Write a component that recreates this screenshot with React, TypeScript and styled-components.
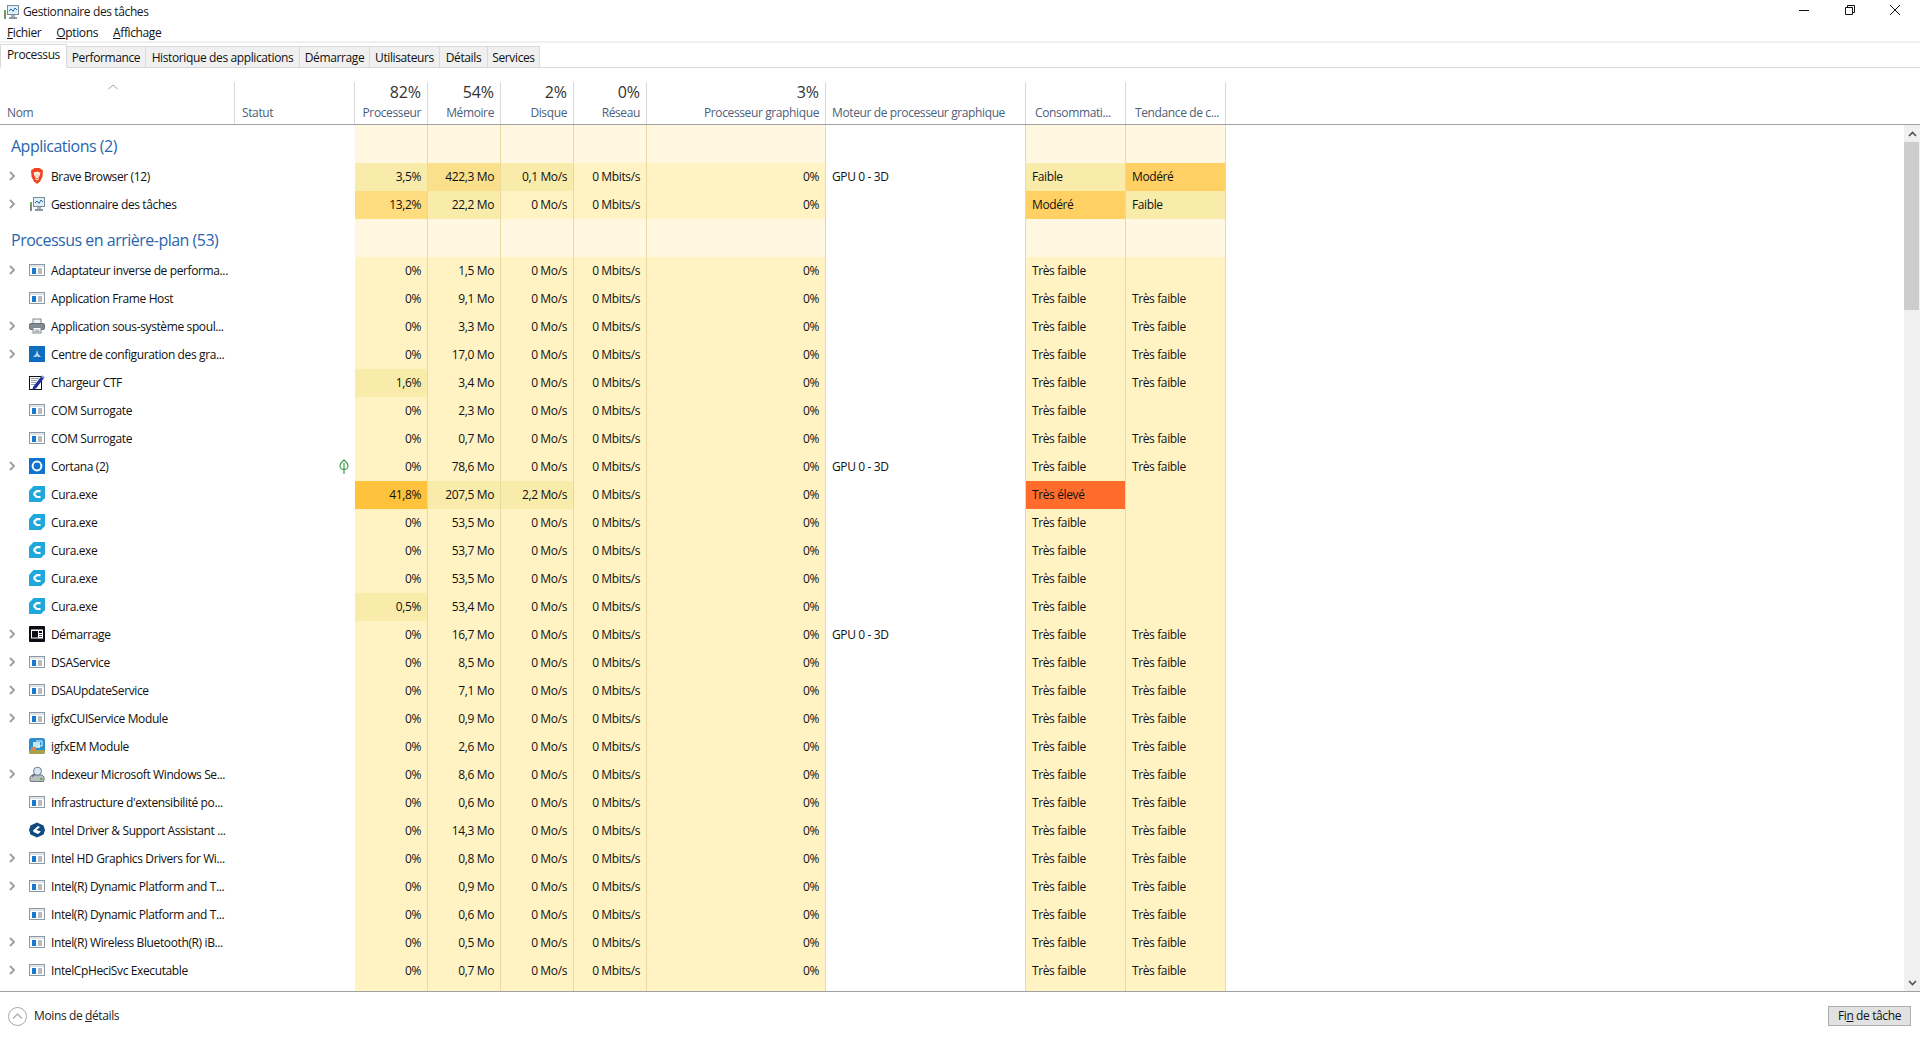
import React from "react";
import styled, { createGlobalStyle } from "styled-components";

const GRID = "235px 120px 73px 73px 73px 73px 179px 200px 100px 100px";
const FONT = `"Open Sans", "Liberation Sans", sans-serif`;

const Global = createGlobalStyle`
  html, body { margin: 0; padding: 0; height: 100%; background: #fff; overflow: hidden; }
  body { font-family: ${FONT}; font-size: 12px; letter-spacing: -0.38px; color: #000; }
`;

const Win = styled.div`
  width: 1920px; height: 1040px; display: flex; flex-direction: column; background: #fff; overflow: hidden;
`;
const TitleBar = styled.div`
  height: 24px; display: flex; align-items: center; padding-left: 3px; gap: 4px; flex: none;
`;
const TitleIcon = styled.div` width: 16px; height: 16px; flex: none; display: flex; `;
const TitleText = styled.span` flex: 1; color: #1a1a1a; padding-bottom: 1px; `;
const WinBtns = styled.div` display: flex; padding-right: 2px; margin-top: -4px; `;
const WinBtn = styled.div`
  width: 45.5px; height: 20px; display: flex; align-items: center; justify-content: center;
`;
const MenuBar = styled.div`
  height: 17px; display: flex; align-items: center; padding-left: 7px; gap: 15px; flex: none;
`;
const MenuItem = styled.span` color: #111; `;
const Under = styled.span` text-decoration: underline; `;
const Band = styled.div` height: 2px; background: #f0f0f0; flex: none; `;
const TabStrip = styled.div`
  height: 25px; display: flex; align-items: flex-end; border-bottom: 1px solid #d9d9d9; box-sizing: border-box; flex: none;
`;
const Tab = styled.div<{ $w: number; $active?: boolean }>`
  width: ${p => p.$w}px; box-sizing: border-box; display: flex; align-items: center; justify-content: center;
  height: ${p => (p.$active ? 24 : 21)}px;
  background: ${p => (p.$active ? "#fff" : "#f0f0f0")};
  border: 1px solid #d9d9d9;
  border-left-width: ${p => (p.$active ? 1 : 0)}px;
  border-bottom: ${p => (p.$active ? "1px solid #fff" : "0")};
  margin-bottom: ${p => (p.$active ? -1 : 0)}px;
  padding-bottom: ${p => (p.$active ? 3 : 0)}px;
  color: #111;
  white-space: nowrap;
`;
const Head = styled.div`
  height: 57px; display: grid; grid-template-columns: ${GRID}; border-bottom: 1px solid #a0a0a0; box-sizing: border-box; flex: none; position: relative;
`;
const HeadCell = styled.div<{ $right?: boolean; $pad?: number }>`
  height: 42px; margin-top: 14px; box-sizing: border-box; display: flex; flex-direction: column; justify-content: flex-end;
  align-items: ${p => (p.$right ? "flex-end" : "flex-start")};
  padding: 0 6px 2px ${p => p.$pad ?? 7}px;
  border-right: 1px solid #d9d9d9;
`;
const HeadPct = styled.div` font-size: 16px; line-height: 20px; margin-bottom: 2px; color: #333; letter-spacing: -0.1px; `;
const HeadLabel = styled.div` color: #4c607a; line-height: 18px; white-space: nowrap; `;
const SortCaret = styled.svg` position: absolute; left: 108px; top: 16px; `;
const BodyWrap = styled.div` flex: 1; min-height: 0; display: flex; `;
const List = styled.div` flex: 1; overflow: hidden; min-width: 0; `;
const Rows = styled.div` display: flex; flex-direction: column; `;
const Row = styled.div<{ $h: number }>`
  display: grid; grid-template-columns: ${GRID}; height: ${p => p.$h}px; flex: none;
`;
const NameCell = styled.div`
  display: flex; align-items: center; min-width: 0; white-space: nowrap; color: #111; padding-bottom: 2px; box-sizing: border-box;
`;
const Expander = styled.div` width: 29px; padding-left: 9px; box-sizing: border-box; flex: none; display: flex; `;
const IconSlot = styled.div` width: 16px; height: 16px; margin-right: 6px; flex: none; display: flex; `;
const StatusCell = styled.div` display: flex; align-items: center; justify-content: flex-end; padding-right: 6px; `;
const GroupTitle = styled.div`
  grid-column: 1 / span 2; display: flex; align-items: center; padding: 3px 0 0 11px; font-size: 16px; color: #2a65ad; letter-spacing: -0.5px;
`;
const HeatCell = styled.div<{ $bg: string; $right?: boolean }>`
  background: ${p => p.$bg};
  border-right: 1px solid #ead9a0;
  box-sizing: border-box;
  display: flex; align-items: center; white-space: nowrap;
  justify-content: ${p => (p.$right ? "flex-end" : "flex-start")};
  padding: ${p => (p.$right ? "0 6px 2px 0" : "0 0 2px 6px")};
  color: #111;
`;
const EngineCell = styled.div`
  display: flex; align-items: center; padding: 0 0 2px 6px; color: #111; border-right: 1px solid #ead9a0; box-sizing: border-box;
`;
const ScrollTrack = styled.div`
  width: 16px; background: #f0f0f0; display: flex; flex-direction: column; flex: none;
`;
const ScrollBtn = styled.div` height: 17px; display: flex; align-items: center; justify-content: center; flex: none; `;
const ScrollThumb = styled.div` height: 168px; width: 15px; background: #cdcdcd; flex: none; `;
const ScrollFill = styled.div` flex: 1; `;
const Footer = styled.div`
  height: 49px; border-top: 1px solid #a0a0a0; box-sizing: border-box; display: flex; align-items: center; padding: 0 9px 0 8px; gap: 7px; flex: none;
`;
const Less = styled.span` flex: 1; color: #222; padding-bottom: 2px; `;
const EndBtn = styled.div`
  width: 83px; height: 20px; box-sizing: border-box; border: 1px solid #adadad; background: #e1e1e1; display: flex; align-items: center; justify-content: center; color: #111; padding-bottom: 1px;
`;

const Box = (p: React.PropsWithChildren) => <svg width="16" height="16" viewBox="0 0 16 16">{p.children}</svg>;

const icons: Record<string, React.ReactNode> = {
  app: <Box><rect x=".5" y="2.5" width="15" height="11" fill="#fff" stroke="#8d98a3" /><rect x="1" y="3" width="14" height="2" fill="#dfe4ea" /><rect x="3" y="6" width="4" height="6" fill="#1b78d0" /><path d="M9 7h4M9 9h4M9 11h4" stroke="#6f7a86" /></Box>,
  brave: <Box><path d="M3.3 1.5 5.5 0h5l2.2 1.5 1.3 1-.6 6.5-2.4 4.4L8 16l-3-2.6L2.6 9 2 2.5z" fill="#f0441f" /><path d="M4.6 4.5 8 3.6l3.4.9-.6 3.3-1.5 2 .6 1.5L8 12.6l-1.9-1.3.6-1.5-1.5-2z" fill="#fff" opacity=".88" /><path d="M6.3 7.5h1l-.2 1zM9.7 7.5h-1l.2 1zM7 10h2l-1 1.4z" fill="#f0441f" /></Box>,
  task: <Box><rect x="4.5" y="1.5" width="11" height="9" fill="#dff0fb" stroke="#7c8b98" /><path d="M6 7l2-2 2 2.4L12 4l2 2" fill="none" stroke="#1f6fb0" /><rect x="8" y="11" width="4" height="2" fill="#a6b0b8" /><rect x="6" y="13" width="8" height="2" fill="#8d98a3" /><rect x="1" y="6" width="2" height="9" fill="#7f8b77" /><rect x="1" y="6" width="2" height="3" fill="#69b34c" /></Box>,
  printer: <Box><rect x="4" y="1" width="8" height="5" fill="#f2f3f5" stroke="#7f8790" /><rect x=".5" y="5.5" width="15" height="6" rx="1.5" fill="#838c96" stroke="#667079" /><rect x="4" y="9.5" width="8" height="5.5" fill="#fff" stroke="#7f8790" /><path d="M5.5 12h5M5.5 13.5h5" stroke="#9aa2aa" /></Box>,
  graphics: <Box><rect width="16" height="16" fill="#0f6dbd" /><path d="M8 4 7 8l-3 3h3l1-1 1 1h3L9.2 8z" fill="#bcdcf3" /></Box>,
  ctf: <Box><rect x=".5" y="2.5" width="12" height="13" fill="#fff" stroke="#111" /><path d="M2 4h8v1H2zM2 6h6v1H2zM2 8h5v1H2zM2 10h4v1H2z" fill="#9aa0a8" /><path d="M4 13 13 1.5l2.5 2L7 14.5l-3.5 1z" fill="#1a2ea0" /><path d="M13 1.5l2.5 2-1 1.2-2.5-2z" fill="#7f93e8" /></Box>,
  cortana: <Box><rect width="16" height="16" fill="#0f74cf" /><circle cx="8" cy="8" r="4.4" fill="none" stroke="#fff" strokeWidth="2" /></Box>,
  cura: <Box><path d="M4.5 0H16v12l-4 4H0V5z" fill="#1ea8dc" /><path d="M11.5 5.2H7.7L5.5 7.3v1.6l2.2 2.1h3.8" fill="none" stroke="#fff" strokeWidth="2.2" /></Box>,
  start: <Box><rect width="16" height="16" rx="1" fill="#0c0c12" /><rect x="2" y="3.5" width="12" height="9" fill="#fff" /><rect x="3" y="5" width="6" height="6.5" fill="#0c0c12" /><rect x="10" y="5" width="3" height="2" fill="#0c0c12" /><rect x="10" y="8" width="3" height="1" fill="#555" /><rect x="10" y="10" width="3" height="1" fill="#555" /></Box>,
  igfx: <Box><rect width="16" height="16" rx="2.5" fill="#2c8fc9" /><path d="M0 12h16v2a2 2 0 0 1-2 2H2a2 2 0 0 1-2-2z" fill="#a9a04e" /><rect x="4" y="4" width="7" height="6" fill="#bfe8f7" /><path d="M7 3h6v5H9" fill="none" stroke="#eaf8ff" /><rect x="2" y="9" width="5" height="4" fill="#d38b4c" /></Box>,
  index: <Box><path d="M1 11 3 9h10l2 2v3.5a1 1 0 0 1-1 1H2a1 1 0 0 1-1-1z" fill="#b9bec3" stroke="#727a82" /><circle cx="8.5" cy="5.2" r="4" fill="#d6e8f5" stroke="#6d7f92" /><path d="M5.5 8 3.2 10.5" stroke="#5d6670" strokeWidth="1.6" /><rect x="11" y="12" width="2.5" height="2" fill="#6fae43" /></Box>,
  driver: <Box><path d="M8 .5 14.5 3.5 16 8l-1.5 4.5L8 15.5 1.5 12.5 0 8l1.5-4.5z" fill="#114a7f" /><path d="M4 8.5 9 4l2 1-3.5 3 4.5 1.5L9 12 4.5 10z" fill="#fff" /></Box>,
};

const Chevron = () => <svg width="7" height="10" viewBox="0 0 7 10"><path d="M1 1l4 4-4 4" fill="none" stroke="#9c9c9c" strokeWidth="1.8" /></svg>;
const Leaf = () => <svg width="10" height="16" viewBox="0 0 10 16"><path d="M5 1C2.5 3 1 4.5 1 7c0 2 2 3.5 4 3.5S9 9 9 7C9 4.5 7.5 3 5 1zM5 4v11" fill="none" stroke="#2e9440" strokeWidth="1.1" /></svg>;

const L0 = "#fff3c4", L1 = "#f9ecab", L2 = "#fbe08c", L3 = "#fedd80", L4 = "#ffc23c", GR = "#fff7df", OR = "#ff6c2c", MOD = "#ffd164";

type P = { n: string; e: boolean; i: string; c: string; m: string; d?: string; g?: string; p?: string; t?: string; leaf?: boolean };
const tf = "Très faible";
const procs: P[] = [
  { n: "Adaptateur inverse de performa...", e: true, i: "app", c: "0%", m: "1,5 Mo", t: "" },
  { n: "Application Frame Host", e: false, i: "app", c: "0%", m: "9,1 Mo" },
  { n: "Application sous-système spoul...", e: true, i: "printer", c: "0%", m: "3,3 Mo" },
  { n: "Centre de configuration des gra...", e: true, i: "graphics", c: "0%", m: "17,0 Mo" },
  { n: "Chargeur CTF", e: false, i: "ctf", c: "1,6%", m: "3,4 Mo" },
  { n: "COM Surrogate", e: false, i: "app", c: "0%", m: "2,3 Mo", t: "" },
  { n: "COM Surrogate", e: false, i: "app", c: "0%", m: "0,7 Mo" },
  { n: "Cortana (2)", e: true, i: "cortana", c: "0%", m: "78,6 Mo", g: "GPU 0 - 3D", leaf: true },
  { n: "Cura.exe", e: false, i: "cura", c: "41,8%", m: "207,5 Mo", d: "2,2 Mo/s", p: "Très élevé", t: "" },
  { n: "Cura.exe", e: false, i: "cura", c: "0%", m: "53,5 Mo", t: "" },
  { n: "Cura.exe", e: false, i: "cura", c: "0%", m: "53,7 Mo", t: "" },
  { n: "Cura.exe", e: false, i: "cura", c: "0%", m: "53,5 Mo", t: "" },
  { n: "Cura.exe", e: false, i: "cura", c: "0,5%", m: "53,4 Mo", t: "" },
  { n: "Démarrage", e: true, i: "start", c: "0%", m: "16,7 Mo", g: "GPU 0 - 3D" },
  { n: "DSAService", e: true, i: "app", c: "0%", m: "8,5 Mo" },
  { n: "DSAUpdateService", e: true, i: "app", c: "0%", m: "7,1 Mo" },
  { n: "igfxCUIService Module", e: true, i: "app", c: "0%", m: "0,9 Mo" },
  { n: "igfxEM Module", e: false, i: "igfx", c: "0%", m: "2,6 Mo" },
  { n: "Indexeur Microsoft Windows Se...", e: true, i: "index", c: "0%", m: "8,6 Mo" },
  { n: "Infrastructure d'extensibilité po...", e: false, i: "app", c: "0%", m: "0,6 Mo" },
  { n: "Intel Driver & Support Assistant ...", e: false, i: "driver", c: "0%", m: "14,3 Mo" },
  { n: "Intel HD Graphics Drivers for Wi...", e: true, i: "app", c: "0%", m: "0,8 Mo" },
  { n: "Intel(R) Dynamic Platform and T...", e: true, i: "app", c: "0%", m: "0,9 Mo" },
  { n: "Intel(R) Dynamic Platform and T...", e: false, i: "app", c: "0%", m: "0,6 Mo" },
  { n: "Intel(R) Wireless Bluetooth(R) iB...", e: true, i: "app", c: "0%", m: "0,5 Mo" },
  { n: "IntelCpHeciSvc Executable", e: true, i: "app", c: "0%", m: "0,7 Mo" },
];

const cpuBg = (c: string) => (c === "0%" ? L0 : c === "41,8%" ? L4 : L1);
const memBg = (m: string) => (m === "207,5 Mo" ? L1 : L0);
const powerBg = (v?: string) => (v === "Très élevé" ? OR : L0);

const Group = ({ title }: { title: string }) => (
  <Row $h={38}>
    <GroupTitle>{title}</GroupTitle>
    {[0, 1, 2, 3, 4].map(i => <HeatCell key={i} $bg={GR} />)}
    <EngineCell />
    <HeatCell $bg={GR} />
    <HeatCell $bg={GR} />
  </Row>
);

type RP = { name: string; e: boolean; i: string; leaf?: boolean; c: [string, string]; m: [string, string]; d: [string, string]; net?: string; gpu?: string; engine?: string; p: [string, string]; t: [string, string] };
const ProcRow = ({ name, e, i, leaf, c, m, d, net = "0 Mbits/s", gpu = "0%", engine, p, t }: RP) => (
  <Row $h={28}>
    <NameCell><Expander>{e && <Chevron />}</Expander><IconSlot>{icons[i]}</IconSlot>{name}</NameCell>
    <StatusCell>{leaf && <Leaf />}</StatusCell>
    <HeatCell $right $bg={c[1]}>{c[0]}</HeatCell>
    <HeatCell $right $bg={m[1]}>{m[0]}</HeatCell>
    <HeatCell $right $bg={d[1]}>{d[0]}</HeatCell>
    <HeatCell $right $bg={L0}>{net}</HeatCell>
    <HeatCell $right $bg={L0}>{gpu}</HeatCell>
    <EngineCell>{engine}</EngineCell>
    <HeatCell $bg={p[1]}>{p[0]}</HeatCell>
    <HeatCell $bg={t[1]}>{t[0]}</HeatCell>
  </Row>
);

const heads: { pct?: string; label: string; right?: boolean; pad?: number }[] = [
  { label: "Nom" },
  { label: "Statut" },
  { pct: "82%", label: "Processeur", right: true },
  { pct: "54%", label: "Mémoire", right: true },
  { pct: "2%", label: "Disque", right: true },
  { pct: "0%", label: "Réseau", right: true },
  { pct: "3%", label: "Processeur graphique", right: true },
  { label: "Moteur de processeur graphique", pad: 6 },
  { label: "Consommati...", pad: 9 },
  { label: "Tendance de c...", pad: 9 },
];

const tabs: [string, number][] = [["Processus", 67], ["Performance", 79], ["Historique des applications", 154], ["Démarrage", 70], ["Utilisateurs", 70], ["Détails", 48], ["Services", 52]];

export default function App() {
  return (
    <Win>
      <Global />
      <TitleBar>
        <TitleIcon>{icons.task}</TitleIcon>
        <TitleText>Gestionnaire des tâches</TitleText>
        <WinBtns>
          <WinBtn><svg width="10" height="10"><path d="M0 5.5h10" stroke="#111" /></svg></WinBtn>
          <WinBtn><svg width="10" height="10"><path d="M.5 2.5h7v7h-7zM2.5 2.5v-2h7v7h-2" fill="none" stroke="#111" /></svg></WinBtn>
          <WinBtn><svg width="10" height="10"><path d="M0 0l10 10M10 0L0 10" stroke="#111" /></svg></WinBtn>
        </WinBtns>
      </TitleBar>
      <MenuBar>
        <MenuItem><Under>F</Under>ichier</MenuItem>
        <MenuItem><Under>O</Under>ptions</MenuItem>
        <MenuItem><Under>A</Under>ffichage</MenuItem>
      </MenuBar>
      <Band />
      <TabStrip>
        {tabs.map(([t, w], i) => <Tab key={t} $w={w} $active={i === 0}>{t}</Tab>)}
      </TabStrip>
      <Head>
        <SortCaret width="10" height="6" viewBox="0 0 10 6"><path d="M.5 5L5 1l4.5 4" fill="none" stroke="#9aa0a6" /></SortCaret>
        {heads.map(h => (
          <HeadCell key={h.label} $right={h.right} $pad={h.pad}>
            {h.pct && <HeadPct>{h.pct}</HeadPct>}
            <HeadLabel>{h.label}</HeadLabel>
          </HeadCell>
        ))}
      </Head>
      <BodyWrap>
        <List>
          <Rows>
            <Group title="Applications (2)" />
            <ProcRow name="Brave Browser (12)" e i="brave" c={["3,5%", L1]} m={["422,3 Mo", L2]} d={["0,1 Mo/s", L1]} engine="GPU 0 - 3D" p={["Faible", L1]} t={["Modéré", MOD]} />
            <ProcRow name="Gestionnaire des tâches" e i="task" c={["13,2%", L3]} m={["22,2 Mo", L1]} d={["0 Mo/s", L0]} p={["Modéré", MOD]} t={["Faible", L1]} />
            <Group title="Processus en arrière-plan (53)" />
            {procs.map((r, i) => {
              const power = r.p ?? tf;
              const trend = r.t ?? tf;
              return (
                <ProcRow key={i} name={r.n} e={r.e} i={r.i} leaf={r.leaf} c={[r.c, cpuBg(r.c)]} m={[r.m, memBg(r.m)]} d={[r.d ?? "0 Mo/s", r.d ? L1 : L0]} engine={r.g} p={[power, powerBg(power)]} t={[trend, L0]} />
              );
            })}
            <ProcRow name="" e={false} i="" c={["", L0]} m={["", L0]} d={["", L0]} net="" gpu="" p={["", L0]} t={["", L0]} />
          </Rows>
        </List>
        <ScrollTrack>
          <ScrollBtn><svg width="9" height="6" viewBox="0 0 9 6"><path d="M1 5l3.5-3.5L8 5" fill="none" stroke="#505050" strokeWidth="1.6" /></svg></ScrollBtn>
          <ScrollThumb />
          <ScrollFill />
          <ScrollBtn><svg width="9" height="6" viewBox="0 0 9 6"><path d="M1 1l3.5 3.5L8 1" fill="none" stroke="#505050" strokeWidth="1.6" /></svg></ScrollBtn>
        </ScrollTrack>
      </BodyWrap>
      <Footer>
        <svg width="19" height="19" viewBox="0 0 19 19"><circle cx="9.5" cy="9.5" r="9" fill="none" stroke="#a8a8a8" /><path d="M5 11.5l4.5-4.5 4.5 4.5" fill="none" stroke="#a8a8a8" strokeWidth="1.2" /></svg>
        <Less>Moins de <Under>d</Under>étails</Less>
        <EndBtn>Fi<Under>n</Under>&nbsp;de tâche</EndBtn>
      </Footer>
    </Win>
  );
}
